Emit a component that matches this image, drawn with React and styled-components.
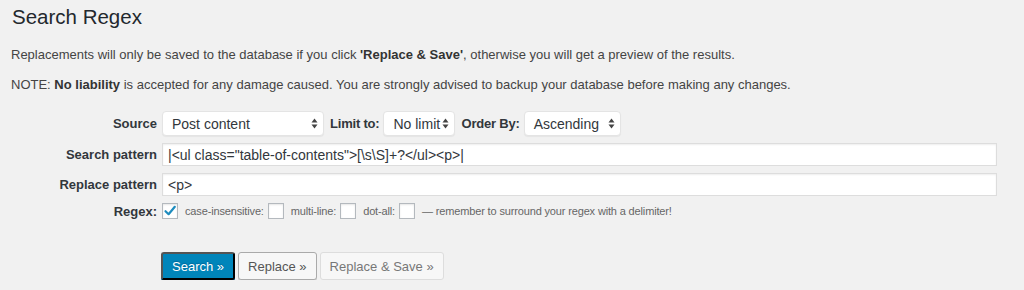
import React from 'react';
import styled, { createGlobalStyle } from 'styled-components';

const GlobalStyle = createGlobalStyle`
  html, body {
    margin: 0;
    padding: 0;
    background: #f1f1f1;
  }
  body {
    font-family: 'Liberation Sans', Arial, sans-serif;
    font-size: 13px;
    color: #444;
  }
`;

const Wrap = styled.div`
  padding: 3px 11px 0 12px;
`;

const Title = styled.h1`
  margin: 0;
  font-size: 20.5px;
  line-height: 28px;
  font-weight: 400;
  color: #23282d;
`;

const Note = styled.p`
  margin: ${(p) => (p.first ? '14px' : '10px')} 0 0 -1px;
  line-height: 20px;
  color: #444;
  strong {
    font-weight: 700;
    color: #333;
  }
`;

const Form = styled.div`
  display: grid;
  grid-template-columns: 145px 1fr;
  column-gap: 5px;
  row-gap: 7px;
  align-items: center;
  margin-top: 16px;
`;

const Label = styled.div`
  text-align: right;
  font-weight: 700;
  color: #32373c;
`;

const Inline = styled.div`
  display: flex;
  align-items: center;
  gap: ${(p) => p.gap || 4}px;
`;

const InlineLabel = styled.span`
  font-weight: 700;
  color: #32373c;
  margin-left: 2px;
  letter-spacing: -0.2px;
`;

const SelectBox = styled.div`
  box-sizing: border-box;
  width: ${(p) => p.width}px;
  height: 25px;
  display: flex;
  align-items: center;
  justify-content: space-between;
  padding: 0 5px 0 9px;
  background: #fff;
  border: 1px solid #e4e4e4;
  border-radius: 4px;
  box-shadow: 0 1px 1px rgba(0, 0, 0, 0.05);
  color: #32373c;
  font-size: 14px;
`;

const Arrows = () => (
  <svg width="7" height="11" viewBox="0 0 7 11">
    <path d="M3.5 0.5 L6.5 4.5 L0.5 4.5 Z" fill="#444" />
    <path d="M3.5 10.5 L6.5 6.5 L0.5 6.5 Z" fill="#444" />
  </svg>
);

const Select = ({ width, children }) => (
  <SelectBox width={width}>
    <span>{children}</span>
    <Arrows />
  </SelectBox>
);

const TextInput = styled.div`
  box-sizing: border-box;
  width: 835px;
  height: 23px;
  display: flex;
  align-items: center;
  padding: 0 5px;
  background: #fff;
  border: 1px solid #ddd;
  box-shadow: inset 0 1px 2px rgba(0, 0, 0, 0.07);
  color: #32373c;
  font-size: 14px;
  white-space: pre;
`;

const Check = styled.span`
  box-sizing: border-box;
  width: 16px;
  height: 16px;
  display: inline-flex;
  align-items: center;
  justify-content: center;
  background: #fff;
  border: 1px solid #b4b9be;
  box-shadow: inset 0 1px 2px rgba(0, 0, 0, 0.1);
  margin-right: 2px;
`;

const Small = styled.span`
  font-size: 11px;
  letter-spacing: -0.15px;
  color: #666;
  margin-left: ${(p) => p.left || 0}px;
`;

const Checkbox = ({ checked }) => (
  <Check>
    {checked && (
      <svg width="14" height="14" viewBox="0 0 14 14">
        <path
          d="M2.5 7.2 L5.6 10.2 L11.8 2.8"
          fill="none"
          stroke="#1e8cbe"
          strokeWidth="2.2"
          strokeLinecap="round"
          strokeLinejoin="round"
        />
      </svg>
    )}
  </Check>
);

const Buttons = styled.div`
  display: flex;
  gap: 3px;
  margin: 33px 0 0 149px;
`;

const Button = styled.button`
  box-sizing: border-box;
  height: 28px;
  padding: 0 9px;
  font-family: inherit;
  font-size: 13px;
  border-radius: 3px;
  border: 1px solid ${(p) => (p.primary ? '#0073aa #006799 #006799' : p.disabled ? '#ddd' : '#aaa')};
  background: ${(p) => (p.primary ? '#0085ba' : '#f7f7f7')};
  color: ${(p) => (p.primary ? '#fff' : p.disabled ? '#777' : '#555')};
  box-shadow: ${(p) => (p.primary ? '0 1px 0 #006799' : p.disabled ? 'none' : '0 1px 0 #ccc')};
  text-shadow: ${(p) => (p.primary ? '0 -1px 1px #006799' : 'none')};
`;

export default function App() {
  return (
    <Wrap>
      <GlobalStyle />
      <Title>Search Regex</Title>
      <Note first>
        Replacements will only be saved to the database if you click <strong>'Replace &amp; Save'</strong>, otherwise you will get a preview of the results.
      </Note>
      <Note>
        NOTE: <strong>No liability</strong> is accepted for any damage caused. You are strongly advised to backup your database before making any changes.
      </Note>
      <Form>
        <Label>Source</Label>
        <Inline>
          <Select width={162}>Post content</Select>
          <InlineLabel>Limit to:</InlineLabel>
          <Select width={72}>No limit</Select>
          <InlineLabel>Order By:</InlineLabel>
          <Select width={97}>Ascending</Select>
        </Inline>
        <Label>Search pattern</Label>
        <TextInput>{'|<ul class="table-of-contents">[\\s\\S]+?</ul><p>|'}</TextInput>
        <Label>Replace pattern</Label>
        <TextInput>{'<p>'}</TextInput>
        <Label>Regex:</Label>
        <Inline gap={4}>
          <Checkbox checked />
          <Small left={1}>case-insensitive:</Small>
          <Checkbox />
          <Small left={1}>multi-line:</Small>
          <Checkbox />
          <Small left={1}>dot-all:</Small>
          <Checkbox />
          <Small left={1}>— remember to surround your regex with a delimiter!</Small>
        </Inline>
      </Form>
      <Buttons>
        <Button primary>Search »</Button>
        <Button>Replace »</Button>
        <Button disabled>Replace &amp; Save »</Button>
      </Buttons>
    </Wrap>
  );
}
